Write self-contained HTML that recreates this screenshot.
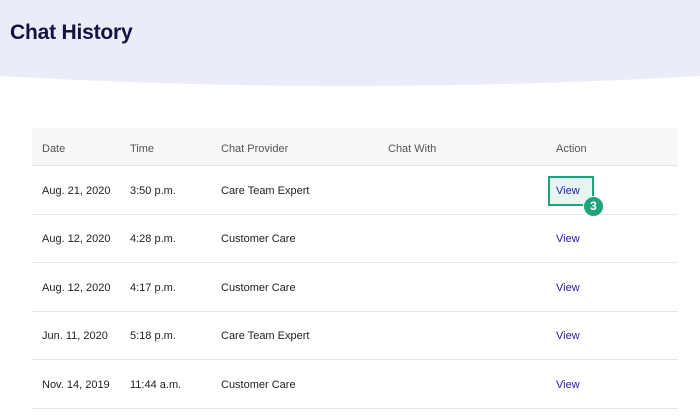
<!DOCTYPE html>
<html><head><style>
*{margin:0;padding:0;box-sizing:border-box}
body{width:700px;height:420px;background:#fff;font-family:"Liberation Sans",sans-serif;position:relative;overflow:hidden}
.hdr{position:absolute;left:0;top:0;width:700px;height:90px}
h1{position:absolute;left:10px;top:21px;font-size:21px;font-weight:bold;color:#16123f;letter-spacing:-0.2px}
.tbl{position:absolute;left:32px;top:128px;width:646px}
.row{position:relative;height:48.5px;border-bottom:1px solid #e6e6e6;font-size:11px;color:#222}
.row.h{height:38px;background:#f7f7f7;color:#555}
.row span{position:absolute;top:50%;transform:translateY(-40%)}
.row.h span{transform:translateY(-35%)}
.v{color:#2a1aa8}
.box{position:absolute;left:548px;top:176px;width:46px;height:30px;border:2px solid #1ea37a;background:#e7f5f2}
.badge{position:absolute;left:583px;top:196px;width:21px;height:21px;border-radius:50%;background:#1ea37a;border:1.5px solid #fff;color:#fff;font-weight:bold;font-size:12px;text-align:center;line-height:18px}
</style></head><body>
<svg class="hdr" viewBox="0 0 700 90"><path d="M0 0H700V76Q350 96 0 76Z" fill="#eaecf8"/></svg>
<h1>Chat History</h1>
<div class="box"></div>
<div class="tbl">
<div class="row h"><span style="left:10px">Date</span><span style="left:98px">Time</span><span style="left:189px">Chat Provider</span><span style="left:356px">Chat With</span><span style="left:524px">Action</span></div>
<div class="row"><span style="left:10px">Aug. 21, 2020</span><span style="left:98px">3:50 p.m.</span><span style="left:189px">Care Team Expert</span><span class="v" style="left:524px">View</span></div>
<div class="row"><span style="left:10px">Aug. 12, 2020</span><span style="left:98px">4:28 p.m.</span><span style="left:189px">Customer Care</span><span class="v" style="left:524px">View</span></div>
<div class="row"><span style="left:10px">Aug. 12, 2020</span><span style="left:98px">4:17 p.m.</span><span style="left:189px">Customer Care</span><span class="v" style="left:524px">View</span></div>
<div class="row"><span style="left:10px">Jun. 11, 2020</span><span style="left:98px">5:18 p.m.</span><span style="left:189px">Care Team Expert</span><span class="v" style="left:524px">View</span></div>
<div class="row"><span style="left:10px">Nov. 14, 2019</span><span style="left:98px">11:44 a.m.</span><span style="left:189px">Customer Care</span><span class="v" style="left:524px">View</span></div>
</div>
<div class="badge">3</div>
</body></html>
